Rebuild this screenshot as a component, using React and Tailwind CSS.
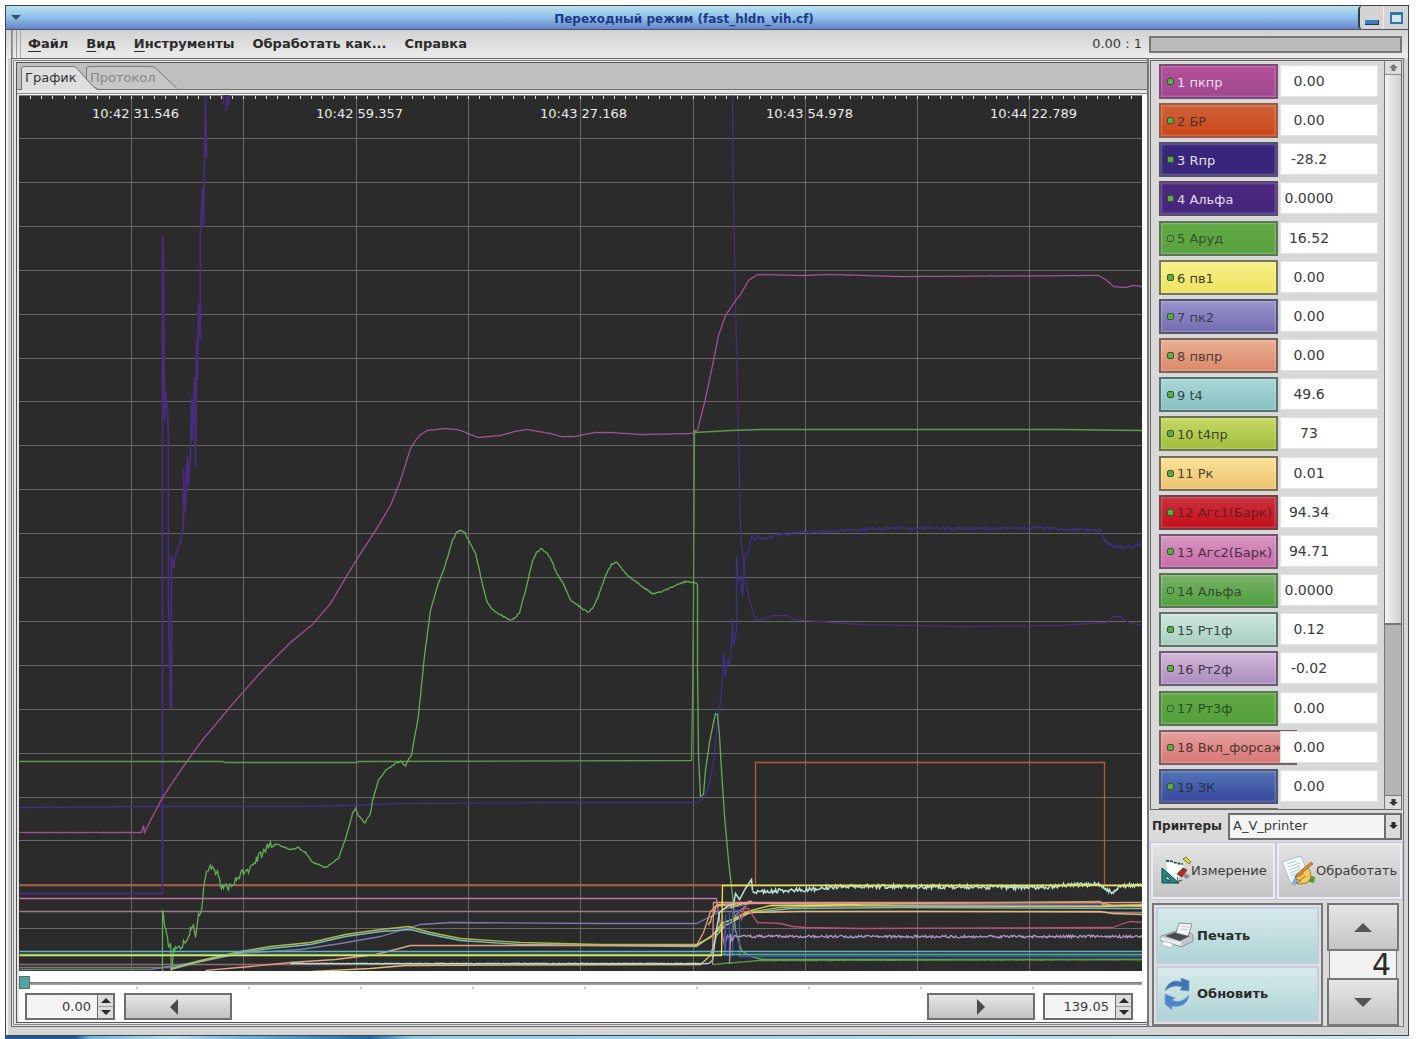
const menuItems = [
  { first: 'Ф', rest: 'айл' },
  { first: 'В', rest: 'ид' },
  { first: 'И', rest: 'нструменты' },
  { rest: 'Обработать как...' },
  { rest: 'Справка' },
]

const channels = [
  { label: '1 пкпр', value: '0.00', tone: 'from-[#b4509a] to-[#a04790] border-[#7d4a78] text-[#f0dcec]' },
  { label: '2 БР', value: '0.00', tone: 'from-[#cf6236] to-[#cb4619] border-[#9a5a48] text-[#4a3026]' },
  { label: '3 Rпр', value: '-28.2', tone: 'from-[#37267c] to-[#37267c] border-[#54506c] text-[#e4e0f0]' },
  { label: '4 Альфа', value: '0.0000', tone: 'from-[#4b267c] to-[#44277d] border-[#5a4a6c] text-[#e4dcf0]' },
  { label: '5 Аруд', value: '16.52', tone: 'from-[#61a943] to-[#59a240] border-[#5f7358] text-[#34502c]', hollow: true },
  { label: '6 пв1', value: '0.00', tone: 'from-[#f8f188] to-[#ece35d] border-[#77755a] text-[#3c3c30]' },
  { label: '7 пк2', value: '0.00', tone: 'from-[#9994ca] to-[#726cb0] border-[#56546f] text-[#3c3a50]' },
  { label: '8 пвпр', value: '0.00', tone: 'from-[#e9b094] to-[#dc876a] border-[#776158] text-[#4c3c36]' },
  { label: '9 t4', value: '49.6', tone: 'from-[#abd6d6] to-[#85c1c0] border-[#587272] text-[#34484a]' },
  { label: '10 t4пр', value: '73', tone: 'from-[#c8d865] to-[#9fbe39] border-[#6a7350] text-[#3c4626]' },
  { label: '11 Рк', value: '0.01', tone: 'from-[#fae49a] to-[#edc06d] border-[#776d58] text-[#4a4230]' },
  { label: '12 Агс1(Барк)', value: '94.34', tone: 'from-[#c8303c] to-[#c40b18] border-[#704048] text-[#701820]' },
  { label: '13 Агс2(Барк)', value: '94.71', tone: 'from-[#d896c0] to-[#c76ba8] border-[#70586a] text-[#4a3044]' },
  { label: '14 Альфа', value: '0.0000', tone: 'from-[#79b168] to-[#4f9f3f] border-[#5a7356] text-[#2e4c2a]', hollow: true },
  { label: '15 Рт1ф', value: '0.12', tone: 'from-[#cfe7e0] to-[#a5cfbd] border-[#5e736c] text-[#38484a]' },
  { label: '16 Рт2ф', value: '-0.02', tone: 'from-[#d4b8d9] to-[#ab8dbd] border-[#675c70] text-[#40364a]' },
  { label: '17 Рт3ф', value: '0.00', tone: 'from-[#61a943] to-[#52a03c] border-[#5a7356] text-[#2e4c2a]', hollow: true },
  { label: '18 Вкл_форсаж', value: '0.00', tone: 'from-[#e4a09e] to-[#da7674] border-[#776060] text-[#4a3434]', wide: true },
  { label: '19 ЗК', value: '0.00', tone: 'from-[#5474b6] to-[#38479c] border-[#50546c] text-[#28304e]' },
]

const timeLabels = [
  { x: 92, text: '10:42 31.546' },
  { x: 316, text: '10:42 59.357' },
  { x: 540, text: '10:43 27.168' },
  { x: 766, text: '10:43 54.978' },
  { x: 990, text: '10:44 22.789' },
]

// amp is the sensor noise, in chart units
const series = [
  { color: '#9d7d8c', pts: '19,911 926,911 1142,912' },
  { color: '#c273a8', pts: '19,898 716,898 717,906 720,925 724,945 727,935 731,940 735,915 742,908 746,905' },
  { color: '#8e6c70', pts: '19,964 700,964' },
  { color: '#6f8060', pts: '19,967 150,967 175,967' },
  { color: '#6f8088', pts: '19,969 150,969' },
  { color: '#b65c36', pts: '19,885 755,885 755,762 1104,762 1104,885 1142,885' },
  { color: '#4a2b7c', pts: '19,893 162,893 162,235 163,260 164,420 165,390 167,410 168,440 168,600 170,708 171,708 171,555 173,567 175,555 180,541 183,525 183,468 185,512 187,455 188,485 190,453 191,398 192,440 194,376 195,467 196,340 197,380 198,303 200,340 200,230 202,187 203,227 204,160 205,96 206,157', width: 1.8 },
  { color: '#4a2b7c', pts: '223,95 223,104 223,95 226,95 226,110 226,95 228,95 228,104 229,96', width: 1.8 },
  { color: '#4a2b7c', pts: '732,95 733,190 735,300 738,440 740,520 741,545 743,560 745,580 749,600 755,620 765,618 772,615 785,615 795,619 805,620 860,624 960,626 1060,625 1107,622 1112,616 1120,616 1128,622 1142,625', amp: 0.4 },
  { color: '#3c3186', pts: '19,807 150,806 300,806 350,805 400,803 560,802 697,802 704,797 709,783 714,755 717,722 720,700 722,680 723,652 725,676 727,658 729,664 731,640 732,618 733,645 736,630 736,555 738,580 740,577 742,596 744,560 745,554 748,553 750,540 752,534' },
  { color: '#3c3186', pts: '752,534 754,541 757,536 768,538 780,534 805,532 850,530 880,528 1000,528 1040,527 1070,529 1100,530 1104,540 1112,546 1130,547 1142,543', amp: 3 },
  { color: '#a24f93', pts: '19,832 141,832 143,825 144,832 150,820 162,797 180,770 200,742 230,706 260,672 290,642 312,624 330,603 340,586 355,561 375,530 390,505 400,480 410,448 415,440 420,434 427,430 445,428 456,429 463,431 470,434 478,437 488,436 500,435 514,431 526,429 538,431 550,433 560,436 574,436 584,434 595,432 610,432 640,434 692,433 697,430 705,398 712,365 718,335 725,315 735,300 740,294 748,280 757,274', amp: 0.3 },
  { color: '#a24f93', pts: '757,274 800,275 830,274 900,276 1098,275 1105,279 1113,286 1125,287 1133,285 1142,286', amp: 0.4 },
  { color: '#5b9c46', pts: '19,761 222,761 225,762 357,762 358,761 691,760 692,700 693,600 694,429 695,432 730,430 760,429 1060,429 1142,430' },
  { color: '#63ad55', pts: '162,971 162,907 164,925 167,935 168,943 170,945 171,970 173,950 180,947 185,941 190,930 192,925 195,934 198,915 200,915 203,890 206,868 210,866 214,870 218,873 220,885 228,888 235,880 242,872 248,870 255,860 268,845 275,843', amp: 7 },
  { color: '#63ad55', pts: '275,843 290,849 298,847 305,852 312,862 325,867 338,858 346,835 352,813 355,808 358,815 364,823 370,813 372,800 378,780 385,770 395,763 400,761 405,765 411,754 418,715 424,655 430,610 438,582 443,570 452,540 456,532 460,530 464,532 468,540 475,553 480,575 486,600 490,607 495,611 503,616 509,620 514,618 519,612 525,590 532,560 536,552 541,548 546,552 550,558 557,574 562,582 570,599 580,607 588,612 592,608 597,598 605,575 611,564 617,562 625,573 632,579 642,586 652,593 662,591 675,585 685,581 695,582', amp: 1.4 },
  { color: '#63ad55', pts: '695,582 697,584 697,667 698,755 700,796 703,794 705,770 709,742 713,722 715,713 717,714 719,735 721,770 724,815 728,860 732,895 735,930 741,950 750,956 762,959 1142,959' },
  { color: '#7c79b4', pts: '150,969 200,961 240,953 300,949 340,943 380,936 400,930 420,924 450,922 600,923 696,923 706,918 712,915 725,908 750,903 1142,905' },
  { color: '#7fb9bd', pts: '170,969 200,961 240,952 270,948 310,944 345,936 380,931 410,929 430,934 460,940 520,944 600,945 696,946 710,936 725,925 745,913 790,908 900,907 1142,908' },
  { color: '#a9bd49', pts: '170,968 200,960 240,951 270,946 310,942 345,934 380,929 408,926 430,932 460,938 520,942 600,944 696,944 710,937 725,922 745,912 780,907 900,903 1100,901 1103,905 1142,904' },
  { color: '#e0a280', pts: '205,970 250,966 290,962 335,959 375,954 395,949 410,945 480,945 696,945 703,932 710,911 717,904 740,903 1142,902' },
  { color: '#e0bb74', pts: '312,971 370,968 405,965 700,964 710,955 716,935 725,925 750,912 800,911 1100,911 1112,913 1142,914' },
  { color: '#e2cf4c', pts: '696,945 712,935 722,922 735,918 750,910 770,905 860,904' },
  { color: '#e6c56a', pts: '708,925 716,906 725,905 732,907 740,903 752,902', amp: 3 },
  { color: '#b9e3d3', pts: '290,963 400,963 708,963 712,960', amp: 0.6 },
  { color: '#b9e3d3', pts: '712,960 715,935 719,912 728,905 733,904 735,893 739,899 745,888 751,879 752,890', width: 1.5 },
  { color: '#b9e3d3', pts: '752,890 756,892 780,890 810,889 840,886 900,886 1040,887 1070,884 1100,884 1112,893 1118,886 1142,884', amp: 4, width: 1.5 },
  { color: '#e2908a', pts: '712,964 713,902 1100,902 1112,905 1142,906' },
  { color: '#3f57b0', pts: '724,955 725,914 725,955 729,955 729,912 729,955 732,955 732,910 739,910 739,956 1142,956' },
  { color: '#5fb4c4', pts: '19,951 1142,951' },
  { color: '#4fb8a0', pts: '19,954 1142,954' },
  { color: '#efe54b', pts: '19,955 721,955 722,885 1142,885' },
  { color: '#579d42', pts: '712,964 735,962 760,960 1142,959', amp: 0.6 },
  { color: '#b295c8', pts: '729,962 730,935 732,940 734,936 1142,936', amp: 2.6 },
  { color: '#c14d78', pts: '741,920 743,908 748,908 752,915 757,922 780,923 792,926 805,927 860,928 1112,927 1120,924 1130,921 1142,922' },
  { color: '#d8d26a', pts: '770,905 1100,906 1142,905' },
]

function withNoise(pts, amp) {
  if (!amp) return pts
  const nodes = pts.split(' ').map((p) => p.split(',').map(Number))
  const out = []
  for (let i = 0; i < nodes.length - 1; i++) {
    const [x1, y1] = nodes[i]
    const [x2, y2] = nodes[i + 1]
    const steps = Math.max(1, Math.round(x2 - x1))
    for (let s = 0; s < steps; s++) {
      const x = x1 + ((x2 - x1) * s) / steps
      const n = Math.sin(x * 127.1 + i * 3.7) * 43758.5
      const y = y1 + ((y2 - y1) * s) / steps + (n - Math.floor(n) - 0.5) * amp
      out.push(`${x.toFixed(1)},${y.toFixed(1)}`)
    }
  }
  out.push(nodes[nodes.length - 1].join(','))
  return out.join(' ')
}

function Chart() {
  const rows = Array.from({ length: 19 }, (_, i) => Math.round(138 + i * 43.9))
  const cols = Array.from({ length: 10 }, (_, i) => Math.round(131 + i * 112.3))
  const ticks = Array.from({ length: 100 }, (_, i) => Math.round(30 + i * 11.23))

  return (
    <svg viewBox="19 95 1123 876" className="block w-full bg-[#2b2b2b]" role="img" aria-label="График">
      <g stroke="#686868" strokeWidth="1">
        {rows.map((y) => (
          <line key={y} x1="19" x2="1142" y1={y + 0.5} y2={y + 0.5} />
        ))}
        {cols.map((x) => (
          <line key={x} x1={x + 0.5} x2={x + 0.5} y1="95" y2="971" />
        ))}
      </g>
      <path d="M19 95.5H1142" stroke="#777" />
      {ticks.map((x) => (
        <path key={x} d={`M${x + 0.5} 96v3`} stroke="#ddd" />
      ))}
      {series.map((s, i) => (
        <polyline
          key={i}
          points={withNoise(s.pts, s.amp)}
          transform="translate(.5 .5)"
          fill="none"
          stroke={s.color}
          strokeWidth={s.width || 1.3}
        />
      ))}
      {timeLabels.map((t) => (
        <text key={t.x} x={t.x} y="118" fill="#ececec" fontSize="13">
          {t.text}
        </text>
      ))}
    </svg>
  )
}

function Arrow({ dir, className }) {
  const shapes = {
    up: 'M0 10 10 0l10 10z',
    down: 'M0 0h20L10 10z',
    left: 'M10 0v20L0 10z',
    right: 'M0 0v20l10-10z',
  }
  const box = dir === 'up' || dir === 'down' ? '0 0 20 10' : '0 0 10 20'
  return (
    <svg viewBox={box} className={className} aria-hidden="true">
      <path d={shapes[dir]} fill="currentColor" />
    </svg>
  )
}

function SmallArrow({ up }) {
  return (
    <svg viewBox="0 0 9 8" className="h-2 w-[9px]" aria-hidden="true">
      <path d={up ? 'M4.500 0 9 4H6.500v3h-4V4H0z' : 'M4.500 7 9 3H6.500V0h-4v3H0z'} fill="currentColor" />
    </svg>
  )
}

function MeasureIcon() {
  return (
    <svg viewBox="0 0 30 30" className="h-[30px] w-[30px] shrink-0" aria-hidden="true">
      <path d="M5 5 22 9l-2 8-4 9H8z" fill="#fff" />
      <path d="M5 5c6-1 9 3 17 3" fill="none" stroke="#164844" strokeWidth="1.600" strokeDasharray="3 1" />
      <path fillRule="evenodd" d="M1 12v15h17zM5 19l5 5H5z" fill="#1d8d88" stroke="#143c3a" strokeWidth="1" />
      <path d="m22 3 3-2 5 5-2 2z" fill="#e8d928" stroke="#4a4624" strokeWidth=".7" />
      <path d="m16 18 6-6 4 2-5 7z" fill="#b5281e" stroke="#4a201c" strokeWidth=".6" />
      <path d="m22 20 2-3 5 3-3 3-2-1z" fill="#8d8d92" />
      <path d="M17 21c-2 4 1 5 4 3" stroke="#333" fill="none" />
    </svg>
  )
}

function ProcessIcon() {
  return (
    <svg viewBox="0 0 35 32" className="h-8 w-[35px] shrink-0" aria-hidden="true">
      <path d="m1 7 19-6 8 20-14 9-4-1z" fill="#f5f8fb" stroke="#a5b4c4" strokeWidth=".8" />
      <path d="m10 29 5-9 10-1-11 11z" fill="#7fb0d8" />
      <path d="m6 9 9-3M7 12l12-4M8 15l11-4M9 18l10-4M10 21l7-3" stroke="#b4c4d4" strokeWidth="1" />
      <path d="m27 20 7 2-1 6-8-2z" fill="#4c9b3c" />
      <path d="M15 24c1-5 5-9 10-12l4 3 1 8-4 5-7 1-4-1 5-2z" fill="#f2c95c" stroke="#94661e" strokeWidth=".8" />
      <path d="m18 22 5-4M19 25l6-4" stroke="#a8761e" strokeWidth="1" />
      <path d="m14 22 3-1L32 9l-2-2-14 12z" fill="#d98f34" stroke="#7c4a18" strokeWidth=".6" />
    </svg>
  )
}

function PrinterIcon() {
  return (
    <svg viewBox="0 0 34 26" className="h-[26px] w-[34px] shrink-0" aria-hidden="true">
      <path d="m1 14 15-5 15 2 2 2v6l-11 6-21-6z" fill="#c3c8cc" stroke="#777d82" strokeWidth=".7" />
      <path d="m5 14 11-4 14 4-10 5z" fill="#474b50" />
      <path d="m19 1 13 1-4 12-12-3z" fill="#f4f6f8" stroke="#70787e" strokeWidth=".8" />
      <path d="m21 4 8 1M20 7l8 1" stroke="#c0c8ce" />
      <path d="m1 15 20 5v4L1 18z" fill="#e9ecee" />
      <path d="m3 19 10 3-2 4-9-3z" fill="#fff" stroke="#9aa0a5" strokeWidth=".5" />
    </svg>
  )
}

function RefreshIcon() {
  return (
    <svg viewBox="0 0 26 32" className="h-8 w-[26px] shrink-0" aria-hidden="true">
      <path d="M1 13C3 5 10 1 17 4V0l8 3v10l-9-1 2-3C12 7 6 8 1 13z" fill="#4173b4" stroke="#6f98cc" strokeWidth=".7" />
      <path d="M25 17c-1 9-9 13-17 11v4l-7-6V16l10 4-3 2c6 3 12 1 17-5z" fill="#4d83c8" stroke="#7ba4d8" strokeWidth=".7" />
    </svg>
  )
}

function TitleBar() {
  return (
    <header className="flex h-6 items-stretch border-b border-[#4c5468] bg-linear-to-b from-[#b9e2ee] via-[#8fbfeb] to-[#6584c8]">
      <button aria-label="Меню окна" className="flex w-5 items-center justify-center text-[#3c4c6c]">
        <Arrow dir="down" className="h-[5px] w-[10px]" />
      </button>
      <h1 className="flex-1 pt-px pr-4 text-center text-[12px] leading-6 font-bold text-[#1d3a86]">
        Переходный режим (fast_hldn_vih.cf)
      </h1>
      <div className="flex w-[50px] rounded-l border-l-2 border-[#333a4c] bg-[#d4d4d4]">
        <button aria-label="Свернуть" className="flex w-6 items-end justify-center border-r border-[#eee] pb-1">
          <span className="h-[5px] w-[14px] border-r border-b border-[#26384c] bg-[#3a80c0]" />
        </button>
        <button aria-label="Развернуть" className="flex flex-1 items-center justify-center">
          <span className="h-3 w-[13px] border-2 border-t-3 border-[#3274ae] bg-[#d8e4ee]" />
        </button>
      </div>
    </header>
  )
}

function MenuBar() {
  return (
    <div className="flex h-7 items-center bg-linear-to-b from-[#d2d2d2] to-[#ececec] pr-[6px] pl-[5px]">
      <div className="flex h-full w-[10px] justify-between border-l border-[#888]">
        <span className="w-px bg-[#999]" />
        <span className="w-px bg-[#999]" />
        <span className="w-px bg-[#aaa]" />
      </div>
      <nav className="flex flex-1 gap-[18px] pl-[7px]">
        {menuItems.map((item) => (
          <button key={item.rest} className="text-[13px] leading-5 font-bold text-[#2a2a2a]">
            {item.first && <span className="underline underline-offset-3">{item.first}</span>}
            {item.rest}
          </button>
        ))}
      </nav>
      <span className="pr-[7px] text-[13px] text-[#3a3a3a]">0.00 : 1</span>
      <div className="h-[17px] w-[253px] border-2 border-[#777] bg-[#bcbcbc]" />
    </div>
  )
}

function Tabs() {
  return (
    <div role="tablist" className="flex h-[27px] items-end border-b border-[#777] bg-[#bfbfbf] pl-1">
      <button role="tab" aria-selected="true" className="relative z-10 h-[23px] w-[65px] pl-1 text-left text-[13px] text-[#333]">
        <svg viewBox="0 0 80 24" className="absolute top-0 left-0 h-6 w-20" aria-hidden="true">
          <path d="M.5 24V3q0-2.500 2.500-2.500H52q3 0 5 3L69 17q3 4 8 7" fill="#dedede" stroke="#707070" />
        </svg>
        <span className="relative">График</span>
      </button>
      <button role="tab" aria-selected="false" className="relative z-20 h-[23px] w-[92px] pl-1 text-left text-[13px] text-[#888]">
        <svg viewBox="0 0 92 23" className="absolute top-0 left-0 h-[23px] w-[92px]" aria-hidden="true">
          <path d="M.5 13V3Q.5.5 3 .5H65q3 0 5 2L91 22.500H11z" fill="#c6c6c6" />
          <path d="M.5 13V3Q.5.5 3 .5H65q3 0 5 2L91 22.500M.5 13 5 18q3 4 7 5" fill="none" stroke="#7c7c7c" />
        </svg>
        <span className="relative">Протокол</span>
      </button>
    </div>
  )
}

function NumberBox({ label, value }) {
  return (
    <div className="flex h-[27px] w-[90px] border-2 border-[#6e6e6e]">
      <input
        aria-label={label}
        defaultValue={value}
        className="w-[70px] bg-[#f4f4f4] pr-[6px] text-right text-[13px] text-[#3a3a3a]"
      />
      <div className="flex flex-1 flex-col border-l border-[#6e6e6e] bg-[#dcdcdc] text-[#2a2a2a]">
        <button aria-label="Больше" className="flex flex-1 items-center justify-center border-b border-[#999]">
          <Arrow dir="up" className="h-[5px] w-[10px]" />
        </button>
        <button aria-label="Меньше" className="flex flex-1 items-center justify-center">
          <Arrow dir="down" className="h-[5px] w-[10px]" />
        </button>
      </div>
    </div>
  )
}

function ChartPanel() {
  return (
    <section className="min-w-0 flex-1 border border-r-0 border-[#666] bg-[#e6e6e6] pt-px pb-px pl-px">
      <div className="border border-r-0 border-[#888] pt-px pb-px pl-[2px]">
        <div className="border border-r-0 border-[#555] bg-white">
          <Tabs />
          <div className="h-1 border-b border-[#888] bg-[#e6e6e6]" />
          <div className="border-l-2 border-[#e0e0e0] pt-px pr-[5px]">
            <Chart />
            <div className="relative flex h-[22px] items-start pt-[5px]">
              <input
                type="range"
                aria-label="Позиция"
                min="0"
                max="139"
                defaultValue="0"
                className="h-[13px] w-full appearance-none bg-[linear-gradient(#fff_6px,#777_6px,#aaa_9px,#fff_9px)] [&::-webkit-slider-thumb]:h-[13px] [&::-webkit-slider-thumb]:w-[11px] [&::-webkit-slider-thumb]:appearance-none [&::-webkit-slider-thumb]:border [&::-webkit-slider-thumb]:border-[#666] [&::-webkit-slider-thumb]:bg-[#4fa5a5]"
              />
              <svg viewBox="0 0 1123 2" className="absolute top-4 left-0 w-full" aria-hidden="true">
                <path d="M117 1h1123" stroke="#999" strokeWidth="1" strokeDasharray="2 110" />
              </svg>
            </div>
            <div className="flex h-[29px] items-start justify-between pr-[9px] pl-[6px]">
              <div className="flex gap-[9px]">
                <NumberBox label="Начало" value="0.00" />
                <button aria-label="Назад" className="flex h-[27px] w-[108px] items-center justify-center border-2 border-[#6e6e6e] bg-linear-to-b from-[#e6e6e6] to-[#c2c2c2] pr-2 text-[#4a4a4a]">
                  <Arrow dir="left" className="h-4 w-[10px]" />
                </button>
              </div>
              <div className="flex gap-2">
                <button aria-label="Вперёд" className="flex h-[27px] w-[108px] items-center justify-center border-2 border-[#6e6e6e] bg-linear-to-b from-[#e6e6e6] to-[#c2c2c2] text-[#4a4a4a]">
                  <Arrow dir="right" className="h-4 w-[10px]" />
                </button>
                <NumberBox label="Конец" value="139.05" />
              </div>
            </div>
          </div>
        </div>
      </div>
    </section>
  )
}

function ChannelRow({ channel }) {
  return (
    <li className="flex h-[35px]">
      <div className="w-[121px] shrink-0">
        <button
          className={[
            'flex h-[35px] items-center gap-[3px] border-2 bg-linear-to-b pl-[6px] text-left text-[13px] whitespace-nowrap inset-shadow-[0_0_2px_1px_#ffffff40]',
            channel.wide ? 'w-[138px]' : 'w-[119px]',
            channel.tone,
          ].join(' ')}
        >
          <span
            className={[
              'h-[7px] w-[7px] shrink-0 rounded-xs border',
              channel.hollow ? 'border-[#3a5a34]' : 'border-[#3a5234] bg-[#58b040]',
            ].join(' ')}
          />
          <span className="pt-[2px]">{channel.label}</span>
        </button>
      </div>
      <input
        readOnly
        aria-label={channel.label}
        value={channel.value}
        className="relative mt-px h-8 w-[98px] border border-[#e2e2e2] bg-white pr-10 text-center text-[14px] text-[#3a3a3a]"
      />
    </li>
  )
}

function ChannelList() {
  return (
    <div className="flex flex-[1_1_0px] overflow-hidden border border-[#666] bg-[#d8d8d8]">
      <div className="flex-1 pt-[3px] pl-2">
        <ul className="grid h-[744px] auto-rows-fr">
          {channels.map((channel) => (
            <ChannelRow key={channel.label} channel={channel} />
          ))}
        </ul>
        <div className="h-1 w-[119px] border-2 border-b-0 border-[#77755a] bg-[#e6dc40]" />
      </div>
      <div className="flex w-[17px] flex-col border-l border-[#777] bg-[#b4b4b4]">
        <button aria-label="Вверх" className="flex h-[14px] items-center justify-center border-b border-[#888] bg-[#dcdcdc] text-[#777]">
          <SmallArrow up />
        </button>
        <div className="h-[550px] border-b-2 border-[#777] bg-linear-to-r from-[#f4f4f4] to-[#cecece]" />
        <div className="flex-1" />
        <button aria-label="Вниз" className="flex h-[14px] items-center justify-center border-t border-[#777] bg-[#dcdcdc] text-[#3a3a3a]">
          <SmallArrow />
        </button>
      </div>
    </div>
  )
}

function SidePanel() {
  return (
    <aside className="flex w-[257px] shrink-0 flex-col border-t border-r border-b border-l-2 border-[#777] bg-[#dadada] px-px pt-px">
      <ChannelList />

      <div className="flex h-[31px] items-center pt-px pl-[2px]">
        <label htmlFor="printer" className="w-[76px] text-[12px] font-bold text-[#2a2a2a]">
          Принтеры
        </label>
        <div className="flex h-[27px] flex-1 border-2 border-[#6e6e6e] bg-[#f4f4f4]">
          <select id="printer" className="flex-1 appearance-none pl-[3px] text-[13px] text-[#3a3a3a]">
            <option>A_V_printer</option>
          </select>
          <span className="flex w-4 items-center justify-center border-l-2 border-[#6e6e6e] bg-[#dcdcdc] text-[#2a2a2a]">
            <SmallArrow />
          </span>
        </div>
      </div>

      <div className="mt-[2px] flex h-14 gap-[2px] pl-px">
        <button className="flex w-[124px] items-center border-2 border-[#ececf2] bg-linear-to-b from-[#e4e4e4] to-[#c4c4c4] pl-2 text-[13px] text-[#3a3a3a] outline outline-[#c4c4de]">
          <MeasureIcon />
          <span>Измерение</span>
        </button>
        <button className="flex flex-1 items-center border-2 border-[#ececf2] bg-linear-to-b from-[#e4e4e4] to-[#c4c4c4] pl-[2px] text-[13px] text-[#3a3a3a] outline outline-[#c4c4de]">
          <ProcessIcon />
          <span>Обработать</span>
        </button>
      </div>

      <div className="mt-1 flex h-[123px] gap-1 pr-[3px] pl-[2px]">
        <div className="flex flex-1 flex-col gap-[2px] border-2 border-[#777] bg-[#e0e0e0] p-[2px]">
          <button className="flex flex-1 items-center gap-[3px] border-2 border-[#c4cce2] bg-linear-to-b from-[#d8eae9] to-[#aed4d6] pl-[2px] text-[13px] font-bold text-[#2a2a2a]">
            <PrinterIcon />
            Печать
          </button>
          <button className="flex flex-1 items-center gap-[7px] border-2 border-[#c4cce2] bg-linear-to-b from-[#d8eae9] to-[#aed4d6] pl-[6px] text-[13px] font-bold text-[#2a2a2a]">
            <RefreshIcon />
            Обновить
          </button>
        </div>
        <div className="flex w-[72px] flex-col">
          <button aria-label="Увеличить" className="flex h-12 items-center justify-center border-2 border-[#777] bg-linear-to-b from-[#e6e6e6] to-[#c4c4c4] text-[#555]">
            <Arrow dir="up" className="h-[9px] w-[18px]" />
          </button>
          <input
            aria-label="Количество"
            defaultValue="4"
            className="mx-[2px] min-h-0 flex-1 border-x border-[#777] bg-[#f2f2f2] pr-[5px] text-right text-[30px] leading-6 text-[#2a2a2a]"
          />
          <button aria-label="Уменьшить" className="flex h-12 items-center justify-center border-2 border-[#777] bg-linear-to-b from-[#e6e6e6] to-[#c4c4c4] text-[#555]">
            <Arrow dir="down" className="h-[9px] w-[18px]" />
          </button>
        </div>
      </div>
    </aside>
  )
}

export default function App() {
  return (
    <div className="bg-white pt-[5px] pr-2 pl-[5px] font-['DejaVu_Sans','Noto_Sans',sans-serif]">
      <div className="border border-[#444] bg-[#d4d4d4]">
        <TitleBar />
        <MenuBar />
        <main className="flex border-l-2 border-[#f2f2f2] pr-1 pb-2 pl-[3px]">
          <ChartPanel />
          <SidePanel />
        </main>
      </div>
      <div className="h-[3px] bg-[linear-gradient(90deg,#1d5a95_5%,#6fb4de_6%,#b4dcf0_12%,#6fb4de_17%,#1d6aa5_26%,#8fcbe8_29%,#a8d8ee_60%,#cfe8f2)]" />
    </div>
  )
}
